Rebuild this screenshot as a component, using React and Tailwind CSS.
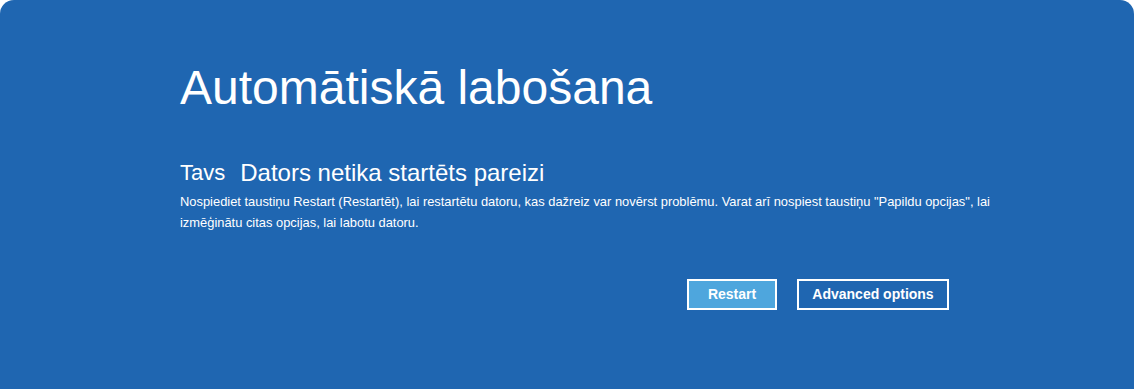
export default function App() {
  return (
    <div className="w-[1134px] h-[389px] bg-white">
      <div className="w-full h-full bg-[#1f66b1] rounded-t-[14px] pl-[180px] pt-[58px] text-white">
        <h1 className="text-[48px] leading-[60px] font-['Liberation_Sans',Arial,sans-serif] font-normal">
          Automātiskā labošana
        </h1>
        <div className="mt-[41px] flex items-baseline font-['Liberation_Sans',Arial,sans-serif] leading-[28px]">
          <span className="text-[22px] relative -top-[1px]">Tavs</span>
          <span className="ml-[15px] text-[24px]">Dators netika startēts pareizi</span>
        </div>
        <p className="mt-[3px] text-[12.9px] leading-[21px] font-['Liberation_Sans',Arial,sans-serif]">
          Nospiediet taustiņu Restart (Restartēt), lai restartētu datoru, kas dažreiz var novērst problēmu. Varat arī nospiest taustiņu "Papildu opcijas", lai
          <br />
          izmēģinātu citas opcijas, lai labotu datoru.
        </p>
        <div className="mt-[46px] flex justify-end gap-[20px] pr-[185px] font-['Liberation_Sans',Arial,sans-serif]">
          <button className="w-[90px] h-[31px] border-2 border-white bg-[#4ea6dd] text-white text-[14px] font-bold">
            Restart
          </button>
          <button className="w-[152px] h-[31px] border-2 border-white bg-transparent text-white text-[14px] font-bold">
            Advanced options
          </button>
        </div>
      </div>
    </div>
  );
}
